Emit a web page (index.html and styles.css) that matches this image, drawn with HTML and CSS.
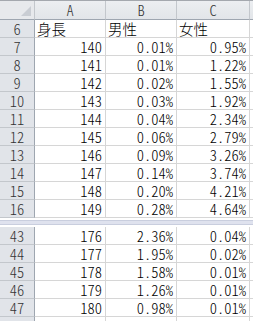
FILE: index.html
```html
<!DOCTYPE html>
<html lang="ja">
<head>
<meta charset="utf-8">
<link rel="stylesheet" href="styles.css">
</head>
<body>
<div class="sheet">
  <div class="corner"><span class="tri"></span></div>
  <div class="colhdr">A</div>
  <div class="colhdr">B</div>
  <div class="colhdr">C</div>
  <div class="colhdr last"></div>

  <div class="rowhdr">6</div><div class="cell txt">身長</div><div class="cell txt">男性</div><div class="cell txt">女性</div><div class="cell"></div>
  <div class="rowhdr">7</div><div class="cell num">140</div><div class="cell num">0.01%</div><div class="cell num">0.95%</div><div class="cell"></div>
  <div class="rowhdr">8</div><div class="cell num">141</div><div class="cell num">0.01%</div><div class="cell num">1.22%</div><div class="cell"></div>
  <div class="rowhdr">9</div><div class="cell num">142</div><div class="cell num">0.02%</div><div class="cell num">1.55%</div><div class="cell"></div>
  <div class="rowhdr">10</div><div class="cell num">143</div><div class="cell num">0.03%</div><div class="cell num">1.92%</div><div class="cell"></div>
  <div class="rowhdr">11</div><div class="cell num">144</div><div class="cell num">0.04%</div><div class="cell num">2.34%</div><div class="cell"></div>
  <div class="rowhdr">12</div><div class="cell num">145</div><div class="cell num">0.06%</div><div class="cell num">2.79%</div><div class="cell"></div>
  <div class="rowhdr">13</div><div class="cell num">146</div><div class="cell num">0.09%</div><div class="cell num">3.26%</div><div class="cell"></div>
  <div class="rowhdr">14</div><div class="cell num">147</div><div class="cell num">0.14%</div><div class="cell num">3.74%</div><div class="cell"></div>
  <div class="rowhdr">15</div><div class="cell num">148</div><div class="cell num">0.20%</div><div class="cell num">4.21%</div><div class="cell"></div>
  <div class="rowhdr">16</div><div class="cell num">149</div><div class="cell num">0.28%</div><div class="cell num">4.64%</div><div class="cell"></div>

  <div class="split"></div>

  <div class="rowhdr">43</div><div class="cell num">176</div><div class="cell num">2.36%</div><div class="cell num">0.04%</div><div class="cell"></div>
  <div class="rowhdr">44</div><div class="cell num">177</div><div class="cell num">1.95%</div><div class="cell num">0.02%</div><div class="cell"></div>
  <div class="rowhdr">45</div><div class="cell num">178</div><div class="cell num">1.58%</div><div class="cell num">0.01%</div><div class="cell"></div>
  <div class="rowhdr">46</div><div class="cell num">179</div><div class="cell num">1.26%</div><div class="cell num">0.01%</div><div class="cell"></div>
  <div class="rowhdr">47</div><div class="cell num">180</div><div class="cell num">0.98%</div><div class="cell num">0.01%</div><div class="cell"></div>
  <div class="rowhdr"></div><div class="cell"></div><div class="cell"></div><div class="cell"></div><div class="cell"></div>
</div>
</body>
</html>
```

FILE: styles.css
```css
html, body {
  margin: 0;
  padding: 0;
  background: #ffffff;
}

.sheet {
  width: 253px;
  height: 321px;
  overflow: hidden;
  display: grid;
  grid-template-columns: 35px 71px 71px 73px 40px;
  grid-template-rows: 19px repeat(11, 18px) 9px repeat(6, 18px);
  font-family: "Noto Sans CJK JP", sans-serif;
  font-size: 14.5px;
  font-weight: 300;
  font-feature-settings: "hwid" 1;
  color: #000;
  border-top: 1px solid #a4a8ae;
}

.corner {
  position: relative;
  background: #e7e9ec;
  border-right: 1px solid #c3c7cc;
  border-bottom: 1px solid #9ea6b0;
}

.tri {
  position: absolute;
  right: 3px;
  bottom: 3px;
  width: 0;
  height: 0;
  border-left: 10px solid transparent;
  border-bottom: 10px solid #c9cdd3;
}

.colhdr {
  background: linear-gradient(#eceef1, #e2e5e9);
  border-right: 1px solid #c3c7cc;
  border-bottom: 1px solid #9ea6b0;
  display: flex;
  align-items: center;
  justify-content: center;
  color: #333;
  line-height: 16px;
}

.colhdr.last {
  border-right: none;
}

.rowhdr {
  background: #e1e4e9;
  border-right: 1px solid #9ea6b0;
  border-bottom: 1px solid #c3c7cc;
  display: flex;
  align-items: center;
  justify-content: center;
  color: #333;
  line-height: 16px;
}

.cell {
  background: #ffffff;
  border-right: 1px solid #d6d6d6;
  border-bottom: 1px solid #d6d6d6;
  display: flex;
  align-items: flex-end;
  line-height: 16px;
  padding: 0 3px 0 2px;
  white-space: nowrap;
}

.num {
  justify-content: flex-end;
}

.txt {
  justify-content: flex-start;
  font-feature-settings: normal;
}

.split {
  grid-column: 1 / -1;
  background: #dfe2ee;
  border-top: 2px solid #ffffff;
  border-bottom: 2px solid #ffffff;
  box-shadow: inset 0 1px 0 #c9cede, inset 0 -1px 0 #c9cede;
}
```
